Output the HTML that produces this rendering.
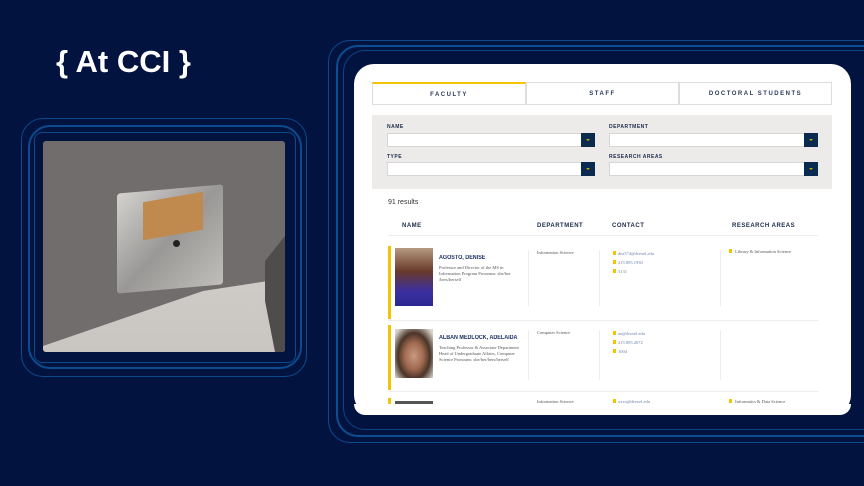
<!DOCTYPE html>
<html><head><meta charset="utf-8"><style>
*{margin:0;padding:0;box-sizing:border-box}
body{width:864px;height:486px;background:#021340;position:relative;overflow:hidden;font-family:"Liberation Sans",sans-serif}
.a{position:absolute}
.frame{position:absolute;border:1px solid #0f4f8f;border-radius:22px}
.t{font-size:6px;font-weight:bold;color:#1b2a4a;letter-spacing:.5px}
.sel{position:absolute;height:14px;background:#fff;border:1px solid #d6d6d6}
.sel b{position:absolute;right:-1px;top:-1px;width:14px;height:14px;background:#0b2a50}
.sel b:after{content:"";position:absolute;left:5px;top:6px;border:2px solid transparent;border-top:2px solid #c9a700}
.tab{position:absolute;top:82px;height:23px;border:1px solid #ddd;background:#fff;font-size:6px;letter-spacing:1.5px;color:#2a3a5a;text-align:center;line-height:22px;font-weight:bold}
.sm{font-family:"Liberation Serif",serif;font-size:4.5px;color:#555}
.y{display:inline-block;width:3px;height:4px;background:#f5c400;margin-right:2px}
.nm{font-family:"Liberation Sans Narrow","Liberation Sans",sans-serif;font-size:6px;font-weight:bold;color:#1b3060;transform:scaleX(.9);transform-origin:left}
</style></head><body>
<div class="a" style="left:56px;top:44px;color:#fff;font-size:31px;font-weight:bold">{ At CCI }</div>
<div class="frame" style="left:21px;top:118px;width:286px;height:259px;border-color:#0a4a8a"></div>
<div class="frame" style="left:28px;top:125px;width:274px;height:244px;border-width:2px;border-color:#0b4b8e"></div>
<div class="frame" style="left:34px;top:132px;width:262px;height:231px;border-color:#0a4a8a;border-radius:8px"></div>
<div class="a" style="left:43px;top:141px;width:242px;height:211px;border-radius:3px;background:#716d6d;overflow:hidden">
<div class="a" style="left:0;top:0;width:242px;height:211px;background:linear-gradient(180deg,#d8d5d1,#c9c6c2);clip-path:polygon(0 211px,0 205px,160px 150px,225px 140px,242px 170px,242px 211px)"></div>
<div class="a" style="left:0;top:0;width:242px;height:211px;background:#4f4c4b;clip-path:polygon(222px 120px,242px 95px,242px 211px,232px 211px,222px 160px)"></div>
<div class="a" style="left:74px;top:48px;width:106px;height:100px;background:linear-gradient(135deg,#d4d2cf,#9a9896 50%,#c0beba);border-radius:3px;transform:skewY(-5deg)"></div>
<div class="a" style="left:100px;top:56px;width:60px;height:38px;background:#c08a4e;transform:skewY(-10deg)"></div>
<div class="a" style="left:130px;top:99px;width:7px;height:7px;border-radius:50%;background:#222"></div>
</div>
<div class="frame" style="left:328px;top:40px;width:560px;height:403px;border-color:#0c4a8c"></div>
<div class="frame" style="left:336px;top:45px;width:560px;height:392px;border-width:2px;border-color:#0d4e92"></div>
<div class="frame" style="left:343px;top:50px;width:560px;height:380px;border-color:#0a4585"></div>
<div class="a" style="left:354px;top:64px;width:497px;height:351px;background:#fff;border-radius:20px;overflow:hidden">
</div>
<div class="tab" style="left:372px;width:154px;border-top:2px solid #f5c400">FACULTY</div>
<div class="tab" style="left:526px;width:153px">STAFF</div>
<div class="tab" style="left:679px;width:153px">DOCTORAL STUDENTS</div>
<div class="a" style="left:372px;top:115px;width:460px;height:74px;background:#edebea"></div>
<div class="a t" style="left:387px;top:124px;font-size:5px">NAME</div>
<div class="a t" style="left:609px;top:124px;font-size:5px">DEPARTMENT</div>
<div class="a t" style="left:387px;top:154px;font-size:5px">TYPE</div>
<div class="a t" style="left:609px;top:154px;font-size:5px">RESEARCH AREAS</div>
<div class="sel" style="left:387px;top:133px;width:208px"><b></b></div>
<div class="sel" style="left:609px;top:133px;width:209px"><b></b></div>
<div class="sel" style="left:387px;top:162px;width:208px"><b></b></div>
<div class="sel" style="left:609px;top:162px;width:209px"><b></b></div>
<div class="a" style="left:388px;top:199px;font-size:7px;color:#333">91 results</div>
<div class="a t" style="left:402px;top:223px">NAME</div>
<div class="a t" style="left:537px;top:223px">DEPARTMENT</div>
<div class="a t" style="left:612px;top:223px">CONTACT</div>
<div class="a t" style="left:732px;top:223px">RESEARCH AREAS</div>
<div class="a" style="left:388px;top:235px;width:430px;height:1px;background:#eee"></div>
<div class="a" style="left:388px;top:246px;width:3px;height:73px;background:#f5c400"></div>
<div class="a" style="left:395px;top:248px;width:38px;height:58px;background:linear-gradient(#b59a80 0%,#6a3a2a 40%,#3b2fa0 75%,#2a2890 100%)"></div>
<div class="a nm" style="left:439px;top:255px">AGOSTO, DENISE</div>
<div class="a sm" style="left:439px;top:265px;width:80px;line-height:6px">Professor and Director of the MS in Information Program Pronouns: she/her /hers/herself</div>
<div class="a sm" style="left:537px;top:250px">Information Science</div>
<div class="a sm" style="left:613px;top:249px;line-height:9px;color:#6b82a8"><span class="y"></span>dea574@drexel.edu<br><span class="y"></span>215.895.1930<br><span class="y"></span>3131</div>
<div class="a sm" style="left:729px;top:249px"><span class="y"></span> Library &amp; Information Science</div>
<div class="a" style="left:528px;top:250px;width:1px;height:56px;background:#eee"></div>
<div class="a" style="left:599px;top:250px;width:1px;height:56px;background:#eee"></div>
<div class="a" style="left:720px;top:250px;width:1px;height:56px;background:#eee"></div>
<div class="a" style="left:388px;top:320px;width:430px;height:1px;background:#eee"></div>
<div class="a" style="left:388px;top:325px;width:3px;height:65px;background:#f5c400"></div>
<div class="a" style="left:395px;top:329px;width:38px;height:49px;background:radial-gradient(ellipse at 50% 55%,#c89a80 0%,#a06a50 35%,#4a3428 60%,#d8d4cc 90%)"></div>
<div class="a nm" style="left:439px;top:335px">ALBAN MEDLOCK, ADELAIDA</div>
<div class="a sm" style="left:439px;top:345px;width:88px;line-height:6px">Teaching Professor &amp; Associate Department Head of Undergraduate Affairs, Computer Science Pronouns: she/her/hers/herself</div>
<div class="a sm" style="left:537px;top:330px">Computer Science</div>
<div class="a sm" style="left:613px;top:329px;line-height:9px;color:#6b82a8"><span class="y"></span>aa@drexel.edu<br><span class="y"></span>215.895.2072<br><span class="y"></span>1004</div>
<div class="a" style="left:528px;top:330px;width:1px;height:50px;background:#eee"></div>
<div class="a" style="left:599px;top:330px;width:1px;height:50px;background:#eee"></div>
<div class="a" style="left:720px;top:330px;width:1px;height:50px;background:#eee"></div>
<div class="a" style="left:388px;top:391px;width:430px;height:1px;background:#eee"></div>
<div class="a" style="left:388px;top:398px;width:3px;height:6px;background:#f5c400"></div>
<div class="a" style="left:395px;top:401px;width:38px;height:3px;background:#555"></div>
<div class="a sm" style="left:537px;top:399px">Information Science</div>
<div class="a sm" style="left:613px;top:399px;color:#6b82a8"><span class="y"></span>xxxx@drexel.edu</div>
<div class="a sm" style="left:729px;top:399px"><span class="y"></span> Informatics &amp; Data Science</div>
<div class="a" style="left:354px;top:404px;width:497px;height:11px;background:#fff;border-radius:0 0 20px 20px"></div>
</body></html>
